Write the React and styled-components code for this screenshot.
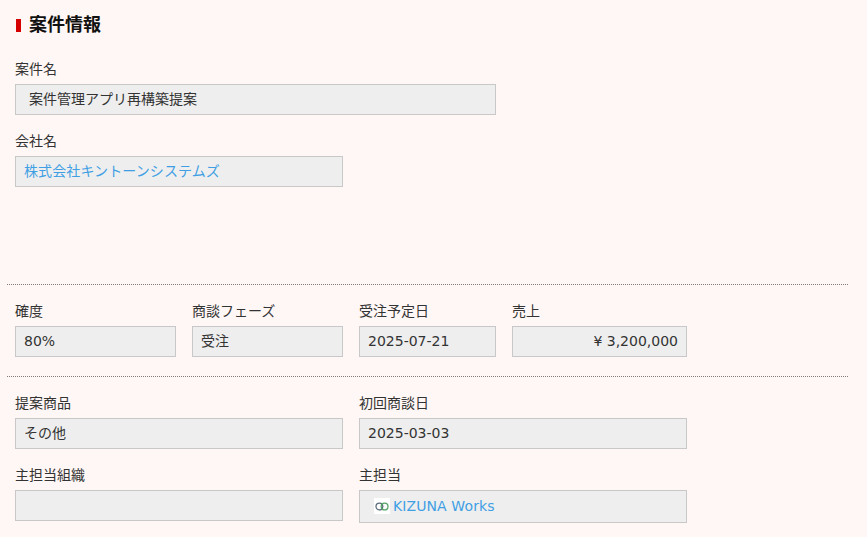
import React from 'react';
import styled, { createGlobalStyle } from 'styled-components';

const GlobalStyle = createGlobalStyle`
    html, body {
        margin: 0;
        padding: 0;
        background: #fff7f5;
    }
    body {
        font-family: "DejaVu Sans", "Noto Sans CJK JP", sans-serif;
        font-size: 14px;
        color: #333;
        overflow: hidden;
    }
`;

const Page = styled.div`
    width: 841px;
    margin-left: 7px;
    height: 537px;
`;

const Heading = styled.h2`
    display: flex;
    align-items: center;
    margin: 0;
    padding: 4px 0 0 9px;
    height: 46px;
    box-sizing: border-box;
    font-size: 18px;
    line-height: 24px;
    font-weight: bold;
    color: #111;
    &::before {
        content: '';
        width: 5px;
        height: 13px;
        margin-right: 8px;
        background: #d60000;
    }
`;

const Section = styled.section`
    padding: ${(p) => p.$top || 0}px 0 ${(p) => p.$bottom || 0}px 8px;
    min-height: ${(p) => p.$minHeight || 0}px;
    box-sizing: border-box;
    border-bottom: ${(p) => (p.$last ? 'none' : '1px dotted #807a78')};
`;

const Row = styled.div`
    display: flex;
    gap: 16px;
    margin-bottom: ${(p) => p.$bottom || 0}px;
`;

const Field = styled.div`
    width: ${(p) => p.$width}px;
`;

const Label = styled.div`
    height: 20px;
    line-height: 20px;
    margin-bottom: 5px;
    color: #333;
`;

const Value = styled.div`
    display: flex;
    align-items: center;
    justify-content: ${(p) => (p.$right ? 'flex-end' : 'flex-start')};
    box-sizing: border-box;
    height: ${(p) => p.$height || 31}px;
    padding: 0 8px 2px ${(p) => p.$indent || 8}px;
    background: #eeeeee;
    border: 1px solid #c8c8c8;
    line-height: 20px;
    white-space: nowrap;
    color: #333;
`;

const LinkText = styled.span`
    color: #3f9fe4;
    letter-spacing: 0.1px;
`;

const UserIcon = styled.svg`
    width: 16px;
    height: 16px;
    margin-right: 3px;
    background: #fff;
    flex: none;
`;

const KizunaIcon = () => (
    <UserIcon viewBox="0 0 16 16">
        <circle cx="5.4" cy="8.5" r="3.4" fill="none" stroke="#5a6b78" strokeWidth="1.3" />
        <circle cx="10.6" cy="8.5" r="3.4" fill="none" stroke="#55a566" strokeWidth="1.3" />
    </UserIcon>
);

const App = () => {
    return (
        <Page>
            <GlobalStyle />
            <Heading>案件情報</Heading>
            <Section $top={13} $minHeight={239}>
                <Row $bottom={16}>
                    <Field $width={481}>
                        <Label>案件名</Label>
                        <Value $indent={13}>案件管理アプリ再構築提案</Value>
                    </Field>
                </Row>
                <Row>
                    <Field $width={328}>
                        <Label>会社名</Label>
                        <Value><LinkText>株式会社キントーンシステムズ</LinkText></Value>
                    </Field>
                </Row>
            </Section>
            <Section $top={16} $bottom={19}>
                <Row>
                    <Field $width={161}>
                        <Label>確度</Label>
                        <Value>80%</Value>
                    </Field>
                    <Field $width={151}>
                        <Label>商談フェーズ</Label>
                        <Value>受注</Value>
                    </Field>
                    <Field $width={137}>
                        <Label>受注予定日</Label>
                        <Value>2025-07-21</Value>
                    </Field>
                    <Field $width={175}>
                        <Label>売上</Label>
                        <Value $right>¥ 3,200,000</Value>
                    </Field>
                </Row>
            </Section>
            <Section $top={16} $last>
                <Row $bottom={16}>
                    <Field $width={328}>
                        <Label>提案商品</Label>
                        <Value>その他</Value>
                    </Field>
                    <Field $width={328}>
                        <Label>初回商談日</Label>
                        <Value>2025-03-03</Value>
                    </Field>
                </Row>
                <Row>
                    <Field $width={328}>
                        <Label>主担当組織</Label>
                        <Value />
                    </Field>
                    <Field $width={328}>
                        <Label>主担当</Label>
                        <Value $indent={14} $height={33}>
                            <KizunaIcon />
                            <LinkText>KIZUNA Works</LinkText>
                        </Value>
                    </Field>
                </Row>
            </Section>
        </Page>
    );
};

export default App;
